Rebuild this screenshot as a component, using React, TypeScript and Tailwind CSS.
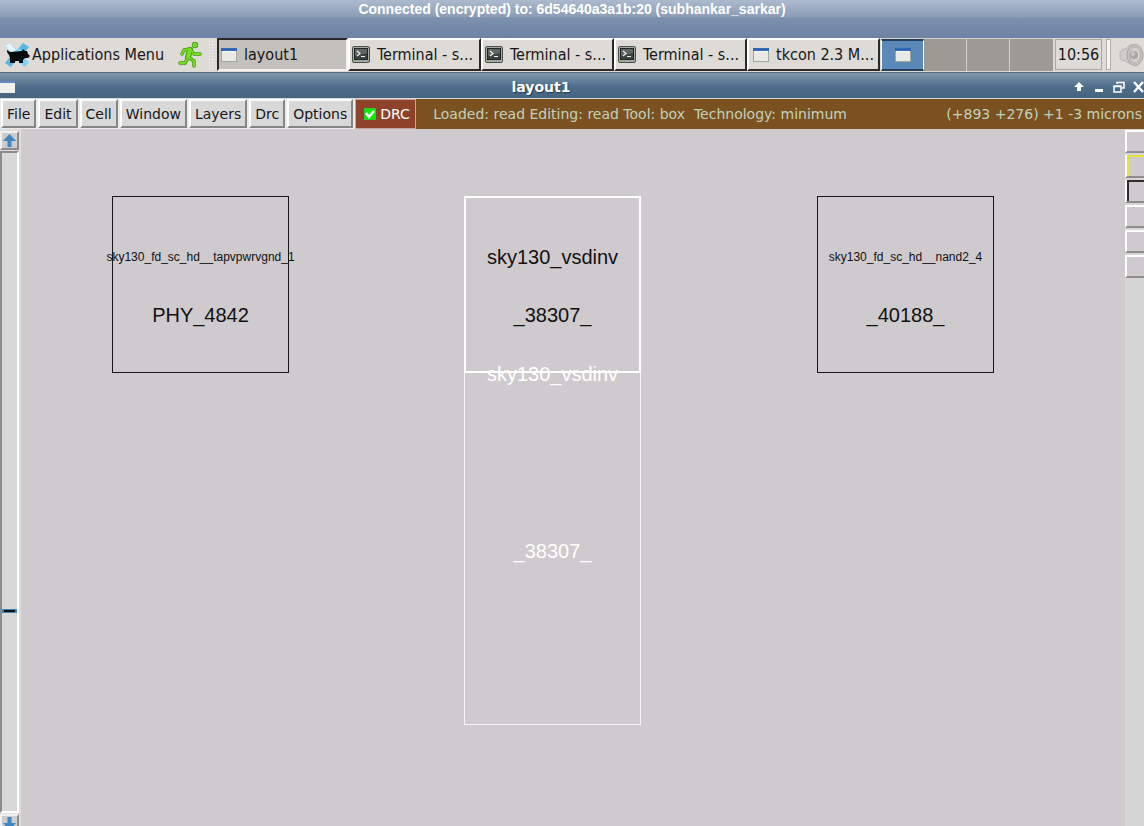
import React from "react";

const menus = ["File", "Edit", "Cell", "Window", "Layers", "Drc", "Options"];

function WindowIcon({ className = "" }: { className?: string }) {
  return (
    <svg className={className} width="16" height="14" viewBox="0 0 16 14" aria-hidden="true">
      <rect x="0.5" y="0.5" width="15" height="13" fill="#e9e9e5" stroke="#a5a5a0" />
      <rect x="0" y="0" width="16" height="3" fill="#3668b2" />
      <rect x="1" y="3" width="14" height="1" fill="#f8f8f8" />
    </svg>
  );
}

function TerminalIcon() {
  return (
    <svg className="shrink-0" width="18" height="17" viewBox="0 0 18 17" aria-hidden="true">
      <rect x="0.5" y="0.5" width="17" height="16" rx="1.5" fill="#a4aaa3" stroke="#4b504c" />
      <rect x="2.5" y="2.5" width="13" height="11" fill="#39423f" stroke="#1f2624" />
      <path d="M3 3h12v4L3 10z" fill="#5d6763" />
      <path d="M5 5l3 2.5L5 10M9 10.5h4" fill="none" stroke="#f2f2f2" strokeWidth="1.2" />
      <path d="M2 15h2" stroke="#79c51b" />
    </svg>
  );
}

function MouseLogo() {
  return (
    <svg className="shrink-0" width="26" height="26" viewBox="0 0 26 26" aria-hidden="true">
      <path d="M1 4l5-3 7 7 6-7 6 4-7 8 7 8-5 4-7-7-6 7-6-4 7-8z" fill="#7ed2f3" />
      <path d="M1 4l5-3 6 7-4 3z" fill="#e4f4fa" />
      <path d="M15 6l4-5 6 4-5 6zM1 21l5-6 4 3-3 7z" fill="#56b9e4" />
      <path d="M3 8l3 2 12-1 1-2 2 2h2l1 3 2 2-2 2h-3l-2 2v3h-4v-2h-4v2H6v-5l-1-3-2-3z" fill="#090b0c" />
    </svg>
  );
}

function RunnerIcon() {
  return (
    <svg width="24" height="26" viewBox="0 0 24 26" aria-hidden="true">
      <g fill="none" strokeLinecap="round" strokeLinejoin="round">
        <g stroke="#3e9a0c" strokeWidth="3.5">
          <path d="M4 12l2-4 6-1 4 5h6M12 8l-2 7 6 4v5M10 16l-3 5H2" />
          <circle cx="17" cy="3" r="1.5" />
        </g>
        <path d="M12 8l-2 7" stroke="#3e9a0c" strokeWidth="6" />
        <g stroke="#78dc20" strokeWidth="2">
          <path d="M4 12l2-4 6-1 4 5h6M12 8l-2 7 6 4v5M10 16l-3 5H2" />
          <circle cx="17" cy="3" r="1.5" />
        </g>
        <path d="M12 8l-2 7" stroke="#78dc20" strokeWidth="4" />
      </g>
    </svg>
  );
}

function SpeakerIcon() {
  return (
    <svg className="shrink-0" width="26" height="24" viewBox="0 0 26 24" aria-hidden="true">
      <path d="M1 9q2-3 5-3l7-5v21l-7-4q-4 0-5-3z" fill="#cfcdca" stroke="#b9b7b4" />
      <ellipse cx="16" cy="12" rx="8" ry="10.5" fill="#c6c4c1" stroke="#aaa8a5" />
      <ellipse cx="16" cy="12" rx="5.5" ry="8" fill="#d2d0cd" stroke="#b2b0ad" />
      <circle cx="15" cy="12" r="4" fill="#aaa8a5" />
      <circle cx="14" cy="11" r="2" fill="#c9c7c4" />
    </svg>
  );
}

function Arrow({ down = false }: { down?: boolean }) {
  return (
    <svg width="15" height="15" viewBox="0 0 15 15" aria-hidden="true">
      <path d={down ? "M5.5 1h4v6H14l-6.500 7L1 7h4.500z" : "M7.500 1L14 8H9.500v6h-4V8H1z"} fill="#3d86c2" />
    </svg>
  );
}

function Task({ label, icon, active = false }: { label: string; icon: React.ReactNode; active?: boolean }) {
  return (
    <button
      className={
        "flex items-center border-2 text-left " +
        (active
          ? "w-[131px] gap-[7px] border-t-[#2b2927] border-r-[#f4f3f1] border-b-[#f4f3f1] border-l-[#2b2927] bg-[#c4c1bc] pl-0.5"
          : "w-[133px] gap-[7px] border-t-white border-r-[#2b2927] border-b-[#2b2927] border-l-white bg-[#dedad6] pl-0.5")
      }
    >
      {icon}
      <span className="whitespace-nowrap">{label}</span>
    </button>
  );
}

function Cell({ place, master, instance, small = false }: { place: string; master: string; instance: string; small?: boolean }) {
  return (
    <div className={"absolute top-[67px] flex h-[177px] w-[177px] flex-col items-center whitespace-nowrap text-xl leading-7 " + place}>
      <span className={"flex h-7 items-center " + (small ? "text-xs" : "")}>{master}</span>
      <span className="mt-[30px]">{instance}</span>
    </div>
  );
}

export default function App() {
  return (
    <div className="flex h-screen flex-col overflow-hidden bg-[#cfcacd] font-['DejaVu_Sans',sans-serif] text-[#171717]">
      <header className="h-[38px] shrink-0 bg-[linear-gradient(#acbace_0px,#8b9cb5_17px,#7b91af_18px,#6e83a5_38px)] text-center font-['Liberation_Sans',sans-serif] text-sm leading-[18px] font-bold text-white">
        Connected (encrypted) to: 6d54640a3a1b:20 (subhankar_sarkar)
      </header>

      <nav aria-label="Taskbar" className="flex h-[34px] shrink-0 bg-[#dedad6] pb-px text-base font-['DejaVu_Sans_Condensed','DejaVu_Sans',sans-serif]">
        <button className="flex w-[170px] items-center gap-0.5 pl-1 whitespace-nowrap">
          <MouseLogo />
          <span>Applications Menu</span>
        </button>
        <button aria-label="Run" className="flex w-9 items-center pl-2">
          <RunnerIcon />
        </button>
        <div className="my-0.5 mr-1 ml-0.5 w-[5px] bg-[radial-gradient(circle,#f8f8f7_1px,transparent_1px)] bg-[length:3px_3px]" />
        <Task active label="layout1" icon={<WindowIcon className="shrink-0" />} />
        <Task label="Terminal - s..." icon={<TerminalIcon />} />
        <Task label="Terminal - s..." icon={<TerminalIcon />} />
        <Task label="Terminal - s..." icon={<TerminalIcon />} />
        <Task label="tkcon 2.3 M..." icon={<WindowIcon className="ml-0.5 shrink-0" />} />
        <div className="ml-px flex bg-[#d5d2ce] pt-px">
          <button aria-label="Workspace 1" className="flex w-[43px] items-center justify-center border-y-2 border-r border-l border-y-[#263e57] border-x-white bg-[#5989b9]">
            <WindowIcon />
          </button>
          <button aria-label="Workspace 2" className="w-[43px] border-r border-[#cfcdca] bg-[#9b9a95]" />
          <button aria-label="Workspace 3" className="w-[43px] border-r border-[#cfcdca] bg-[#9b9a95]" />
          <button aria-label="Workspace 4" className="w-[43px] bg-[#9b9a95]" />
        </div>
        <time className="my-px ml-0.5 flex w-[47px] items-center justify-center border border-[#aaa7a3]">10:56</time>
        <div className="my-px ml-1 w-[5px] border border-[#b0ada8] bg-[#f5f4f2]" />
        <button aria-label="Volume" className="ml-2 flex flex-1 items-center overflow-hidden">
          <SpeakerIcon />
        </button>
      </nav>

      <div className="flex h-[27px] shrink-0 items-center border-t border-b border-t-[#53697b] border-b-[#d8dbdd] bg-[linear-gradient(#8498ad_0px,#718ba3_4px,#4c6c89_14px,#46647f_26px)] pt-0.5 text-white">
        <div className="h-3 w-[15px] border-t-2 border-[#668bc1] bg-[#f0f0ef]" />
        <h1 className="flex-1 pr-1.5 text-center text-sm leading-5 font-bold [text-shadow:1px_1px_1px_#263c50]">layout1</h1>
        <div className="-mr-px flex items-center gap-2">
          <button aria-label="Shade window">
            <svg width="12" height="12" viewBox="0 0 12 12"><path d="M6 1l5 5H8v4H4V6H1z" fill="#fff" /></svg>
          </button>
          <button aria-label="Minimize window">
            <svg width="12" height="12" viewBox="0 0 12 12"><path d="M2 8h8v3H2z" fill="#fff" /></svg>
          </button>
          <button aria-label="Restore window">
            <svg width="12" height="12" viewBox="0 0 12 12"><path d="M1 5h7v6H1zM1 5.500h7M4 3V1.500h7V7H9" fill="none" stroke="#fff" strokeWidth="1.5" /></svg>
          </button>
          <button aria-label="Close window">
            <svg width="12" height="12" viewBox="0 0 12 12"><path d="M1 1l9 10M10 1L1 11" stroke="#fff" strokeWidth="2.500" /></svg>
          </button>
        </div>
      </div>

      <div className="flex h-[30px] shrink-0 bg-[#7c5120] text-sm">
        <div className="flex gap-0.5 bg-[#ebeaea] pr-0.5 pl-px">
          {menus.map((name) => (
            <button
              key={name}
              className="mb-px border-2 border-t-white border-r-[#858585] border-b-[#858585] border-l-white bg-[#d8d8d8] px-1"
            >
              {name}
            </button>
          ))}
        </div>
        <label className="flex w-[61px] items-center gap-1 border border-[#caa49a] bg-[#8d4229] pl-2 text-white">
          <span className="relative flex">
            <input type="checkbox" defaultChecked className="h-3 w-3 appearance-none border border-[#32c532] bg-[#00ef00]" />
            <svg className="pointer-events-none absolute inset-0" width="12" height="12" viewBox="0 0 12 12">
              <path d="M2 5l3 4 5-6" fill="none" stroke="#fff" strokeWidth="2.500" />
            </svg>
          </span>
          DRC
        </label>
        <div className="flex flex-1 items-center justify-between pr-0.5 pl-[17px] whitespace-pre text-[#c0d2bf]">
          <span>{"Loaded: read Editing: read Tool: box  Technology: minimum"}</span>
          <span>(+893 +276) +1 -3 microns</span>
        </div>
      </div>

      <main className="flex min-h-0 flex-1">
        <div className="flex w-[21px] shrink-0 flex-col gap-px border-r border-[#dedcdd] bg-[#dedcdd] pt-0.5 pr-px">
          <button aria-label="Scroll up" className="flex h-[19px] w-[19px] shrink-0 items-center justify-center border-2 border-t-[#f0f0f0] border-r-[#8b8b8b] border-b-[#8b8b8b] border-l-[#f0f0f0] bg-[#cccccc]">
            <Arrow />
          </button>
          <div className="flex flex-1 flex-col border-2 border-t-[#8b8b8b] border-r-white border-b-white border-l-[#8b8b8b] bg-[#d8d8d8]">
            <div className="flex-[457]" />
            <div className="h-1 border-x-2 border-y border-[#3d86b9] bg-[#111111]" />
            <div className="flex-[199]" />
          </div>
          <div className="h-3 shrink-0">
            <button aria-label="Scroll down" className="flex h-[19px] w-[19px] items-center justify-center border-2 border-t-[#f0f0f0] border-r-[#8b8b8b] border-b-[#8b8b8b] border-l-[#f0f0f0] bg-[#cccccc]">
              <Arrow down />
            </button>
          </div>
        </div>

        <section aria-label="Layout canvas" className="relative min-w-0 flex-1 overflow-hidden font-['Liberation_Sans',sans-serif] text-[#111111]">
          <Cell small place="left-[91px] border border-[#161616] pt-[46px]" master="sky130_fd_sc_hd__tapvpwrvgnd_1" instance="PHY_4842" />
          <div className="absolute top-[243px] left-[443px] h-[353px] w-[177px] border border-[#f7f5f6]" />
          <Cell place="left-[443px] border-2 border-white pt-[45px]" master="sky130_vsdinv" instance="_38307_" />
          <div className="absolute top-[231px] left-[443px] flex w-[177px] flex-col items-center gap-[149px] text-xl leading-7 text-white">
            <span>sky130_vsdinv</span>
            <span>_38307_</span>
          </div>
          <Cell small place="left-[796px] border border-[#161616] pt-[46px]" master="sky130_fd_sc_hd__nand2_4" instance="_40188_" />
        </section>

        <aside aria-label="Layers" className="flex w-[19px] shrink-0 flex-col gap-0.5 bg-[#d6d5d6] pt-px">
          {[
            "border-t-white border-l-white",
            "border-t-[#e6e43c] border-l-[#e6e43c]",
            "border-t-[#2d2d2d] border-l-[#2d2d2d]",
            "border-t-white border-l-white",
            "border-t-white border-l-white",
            "border-t-white border-l-white",
          ].map((edge, i) => (
            <button key={i} aria-label={"Layer " + (i + 1)} className="h-[23px] shrink-0 border-b-2 border-l-2 border-b-[#8e8c8d] border-l-white bg-[#cfcacd]">
              <span className={"block h-full border-t-2 " + edge + (i === 1 || i === 2 ? " border-l-2" : "")} />
            </button>
          ))}
        </aside>
      </main>
    </div>
  );
}
